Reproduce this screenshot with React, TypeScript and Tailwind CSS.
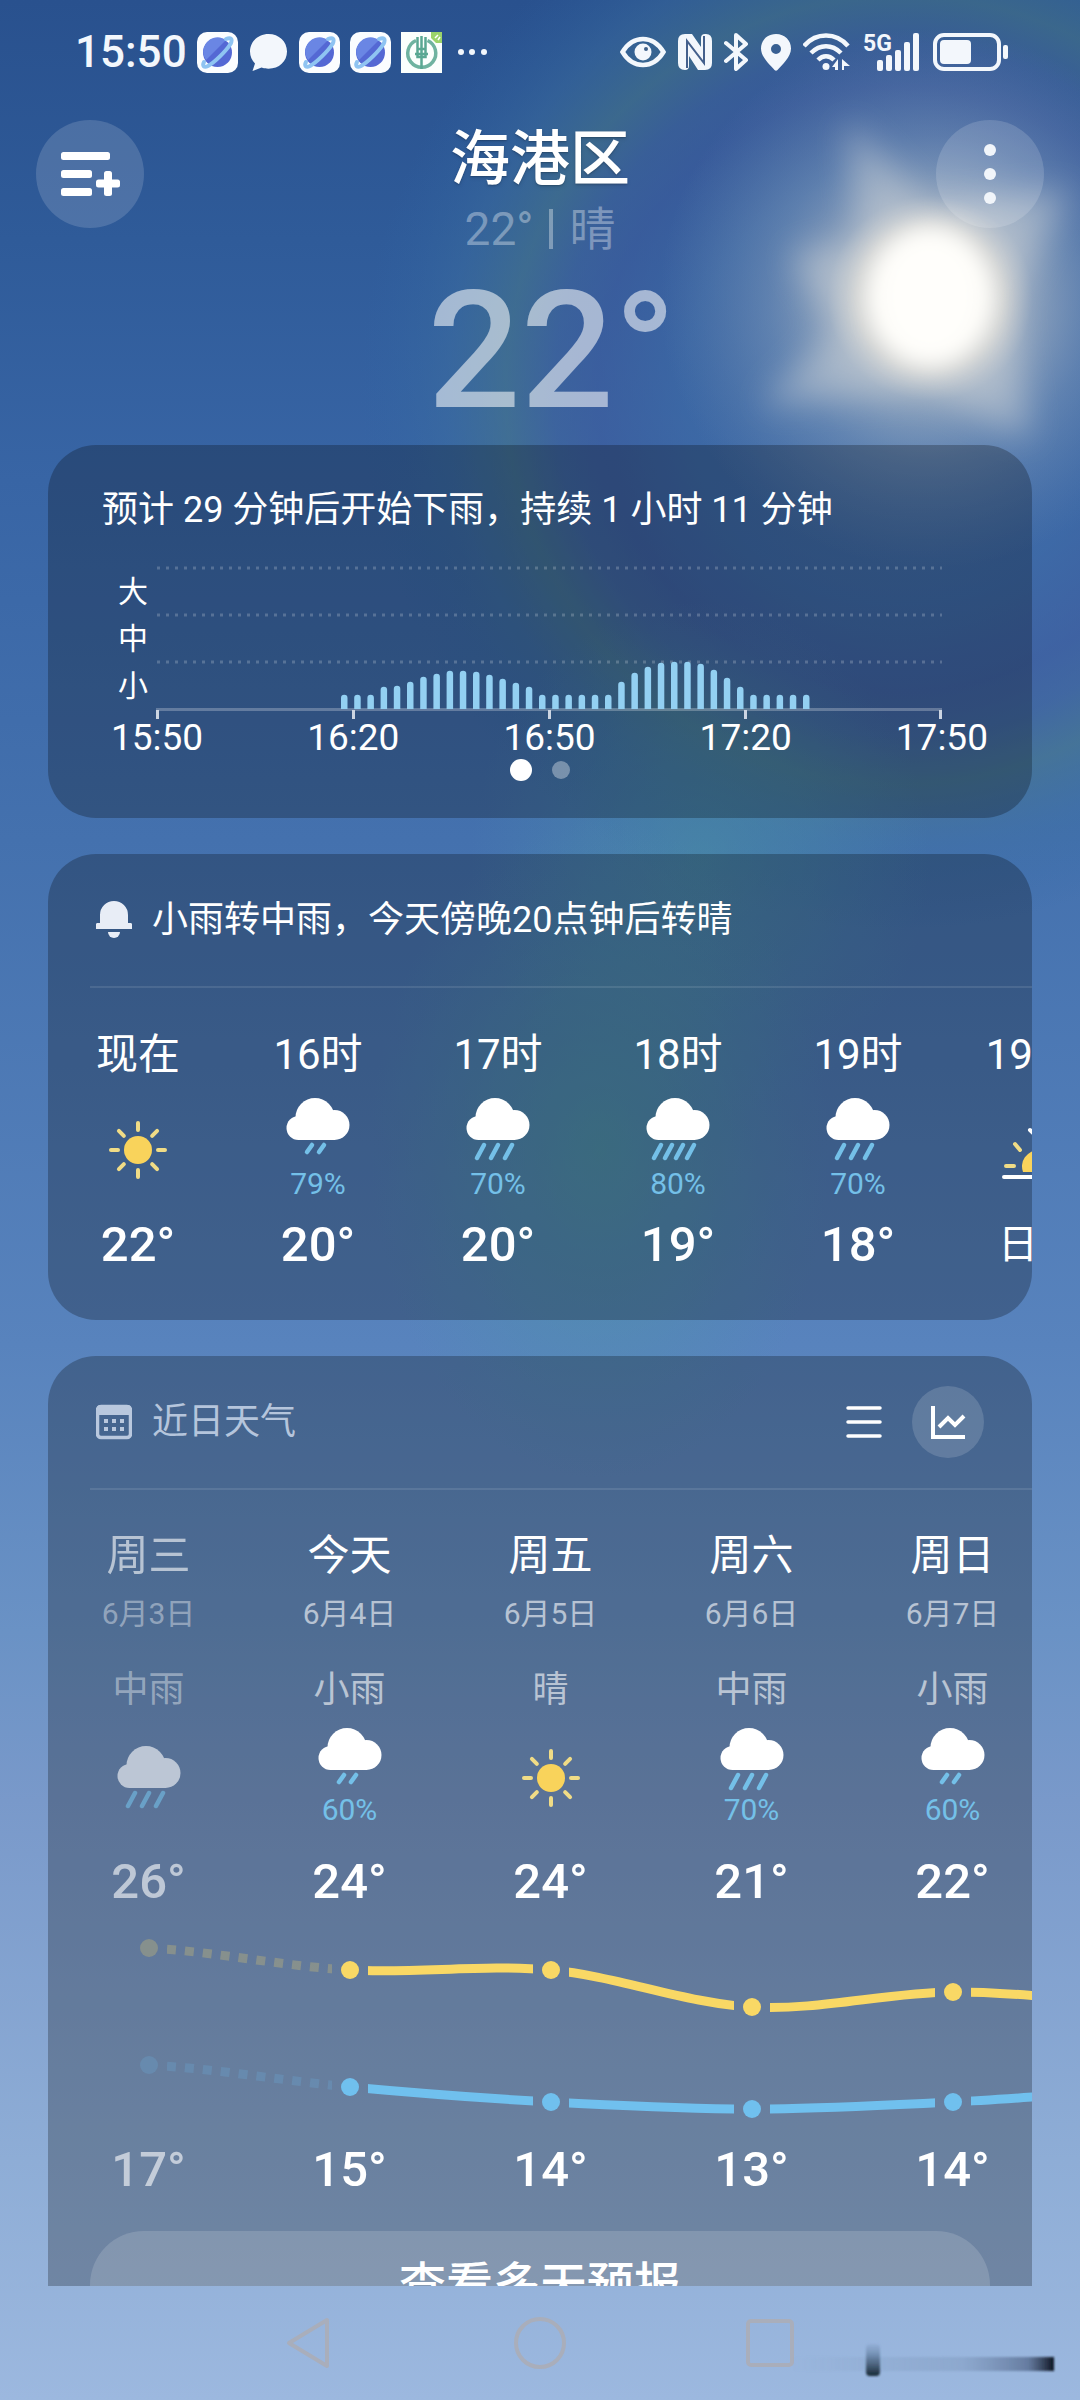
import type { ReactNode } from "react";

type Rain = "light" | "moderate" | "heavy";
type Sky = Rain | "sunny" | "sunset";

interface Hour {
  label: string;
  sky: Sky;
  chance?: string;
  value: string;
}

interface Day {
  name: string;
  date: string;
  text: string;
  sky: Sky;
  chance?: string;
  high: string;
  low: string;
  past?: boolean;
}

const HOURS: Hour[] = [
  { label: "现在", sky: "sunny", value: "22°" },
  { label: "16时", sky: "light", chance: "79%", value: "20°" },
  { label: "17时", sky: "moderate", chance: "70%", value: "20°" },
  { label: "18时", sky: "heavy", chance: "80%", value: "19°" },
  { label: "19时", sky: "moderate", chance: "70%", value: "18°" },
  { label: "19:28", sky: "sunset", value: "日落" },
];

const DAYS: Day[] = [
  { name: "周三", date: "6月3日", text: "中雨", sky: "moderate", high: "26°", low: "17°", past: true },
  { name: "今天", date: "6月4日", text: "小雨", sky: "light", chance: "60%", high: "24°", low: "15°" },
  { name: "周五", date: "6月5日", text: "晴", sky: "sunny", high: "24°", low: "14°" },
  { name: "周六", date: "6月6日", text: "中雨", sky: "moderate", chance: "70%", high: "21°", low: "13°" },
  { name: "周日", date: "6月7日", text: "小雨", sky: "light", chance: "60%", high: "22°", low: "14°" },
];

// One bar every two minutes, starting at 16:19
const RAIN_BARS = [
  14, 14, 14, 22, 23, 27, 32, 35, 38, 38, 37, 34, 30, 26, 22, 14, 14, 14, 14, 14,
  14, 27, 36, 42, 46, 47, 47, 45, 39, 31, 22, 14, 14, 14, 14, 14,
];
const RAIN_TIMES = ["15:50", "16:20", "16:50", "17:20", "17:50"];

const DROPS: Record<Rain, { x: number[]; dx: number; y2: number }> = {
  light: { x: [26, 38], dx: 5, y2: 54 },
  moderate: { x: [18, 32, 46], dx: 7, y2: 60 },
  heavy: { x: [15, 26, 37, 48], dx: 7, y2: 60 },
};

const RAYS = [0, 45, 90, 135, 180, 225, 270, 315];

function Backdrop() {
  return (
    <svg
      className="absolute inset-0 h-full w-full"
      viewBox="0 0 1080 2400"
      preserveAspectRatio="none"
      aria-hidden="true"
    >
      <defs>
        <linearGradient id="sky" x1="0" y1="0" x2="0" y2="1">
          <stop offset="0" stopColor="#29518e" />
          <stop offset="0.1" stopColor="#2f5b99" />
          <stop offset="0.2" stopColor="#3865a5" />
          <stop offset="0.35" stopColor="#4471ae" />
          <stop offset="0.56" stopColor="#5883bd" />
          <stop offset="0.68" stopColor="#6a92c5" />
          <stop offset="0.75" stopColor="#7999ca" />
          <stop offset="0.9" stopColor="#8eadd6" />
          <stop offset="1" stopColor="#9cb8df" />
        </linearGradient>
        <radialGradient id="halo" gradientUnits="userSpaceOnUse" cx="900" cy="390" r="540">
          <stop offset="0" stopColor="#4a76aa" stopOpacity="0.6" />
          <stop offset="0.4" stopColor="#3f6aa6" stopOpacity="0.65" />
          <stop offset="0.56" stopColor="#3f5d9e" stopOpacity="0.6" />
          <stop offset="0.64" stopColor="#42649b" stopOpacity="0.55" />
          <stop offset="0.73" stopColor="#487889" stopOpacity="0.55" />
          <stop offset="0.84" stopColor="#3d709f" stopOpacity="0.4" />
          <stop offset="1" stopColor="#2f66a6" stopOpacity="0" />
        </radialGradient>
        <radialGradient id="trail">
          <stop offset="0" stopColor="#4d9aa0" stopOpacity="0.75" />
          <stop offset="0.5" stopColor="#4d95a6" stopOpacity="0.45" />
          <stop offset="1" stopColor="#4d90b0" stopOpacity="0" />
        </radialGradient>
        <radialGradient id="glow" gradientUnits="userSpaceOnUse" cx="930" cy="298" r="270">
          <stop offset="0" stopColor="#ffffff" />
          <stop offset="0.18" stopColor="#fffdf8" />
          <stop offset="0.27" stopColor="#f0e8da" stopOpacity="0.8" />
          <stop offset="0.38" stopColor="#c9cdd0" stopOpacity="0.55" />
          <stop offset="0.6" stopColor="#9fb0c6" stopOpacity="0.35" />
          <stop offset="1" stopColor="#7892b6" stopOpacity="0" />
        </radialGradient>
        <filter id="soft" x="-50%" y="-50%" width="200%" height="200%">
          <feGaussianBlur stdDeviation="12" />
        </filter>
        <filter id="softer" x="-50%" y="-50%" width="200%" height="200%">
          <feGaussianBlur stdDeviation="16" />
        </filter>
      </defs>
      <rect width="1080" height="2400" fill="url(#sky)" />
      <circle cx="900" cy="390" r="540" fill="url(#halo)" />
      <ellipse cx="700" cy="860" rx="230" ry="260" fill="url(#trail)" opacity="0.6" />
      <ellipse cx="600" cy="1150" rx="230" ry="330" fill="url(#trail)" opacity="0.8" />
      <circle cx="930" cy="298" r="270" fill="url(#glow)" />
      <path
        d="M846 120 L930 205 L1070 190 L1012 300 L1030 440 L930 392 L760 405 L835 330 L790 255 L858 240Z"
        fill="#dfe0de"
        opacity="0.4"
        filter="url(#softer)"
      />
      <ellipse cx="930" cy="296" rx="58" ry="68" fill="#fffefb" filter="url(#soft)" />
    </svg>
  );
}

function PlanetIcon() {
  return (
    <svg width="41" height="41" viewBox="0 0 41 41" aria-hidden="true">
      <rect width="41" height="41" rx="10" fill="#fbfdff" />
      <circle cx="20.5" cy="20.5" r="14.5" fill="#5468d4" />
      <path d="M7 15a14.500 14.500 0 0 1 22-7L9 28a14.500 14.500 0 0 1-2-13Z" fill="#6a86e4" />
      <path
        d="M29 7c5-2 7 0 4.500 5C29 19 18 30 11 34c-4 2-6 0-4-4"
        fill="none"
        stroke="#8fc4f2"
        strokeWidth="4"
        strokeLinecap="round"
      />
    </svg>
  );
}

function StatusBar() {
  return (
    <div className="flex h-[104px] shrink-0 items-center justify-between pr-[71px] pl-[75px] text-[#f3f7fc]">
      <div className="flex items-center gap-2.5">
        <span className="text-[44px] leading-[44px] font-medium">15:50</span>
        <PlanetIcon />
        <svg width="41" height="41" viewBox="0 0 41 41" aria-hidden="true">
          <path
            d="M20.500 2C10.500 2 2 9.500 2 19.500c0 5 2 9 5 12L4.500 39l9-3.500c2 .8 4.500 1.200 7 1.200C31 36.700 39 29.500 39 19.500S31 2 20.500 2Z"
            fill="currentColor"
          />
        </svg>
        <PlanetIcon />
        <PlanetIcon />
        <svg width="41" height="41" viewBox="0 0 41 41" aria-hidden="true">
          <rect width="41" height="41" fill="#fbfffd" />
          <path d="M30 0h11v11h-6l-5-5Z" fill="#9bd36a" />
          <path d="M34 6l3-3M37 8l2-3" stroke="#fff" strokeWidth="1.500" />
          <path d="M15 8.500a14 14 0 1 0 11.500 0" fill="none" stroke="#6fb3a0" strokeWidth="3.500" />
          <path
            d="M16.500 5v12h8V5M20.500 4v33M14 22h13M16.500 17v8h8v-8"
            fill="none"
            stroke="#5aa893"
            strokeWidth="2.500"
          />
        </svg>
        <svg className="ml-1" width="32" height="8" viewBox="0 0 32 8" fill="currentColor" aria-hidden="true">
          <circle cx="5" cy="4" r="3" />
          <circle cx="16" cy="4" r="3" />
          <circle cx="28" cy="4" r="3" />
        </svg>
      </div>

      <div className="flex items-center gap-3">
        <svg width="46" height="32" viewBox="0 0 46 32" aria-hidden="true">
          <path
            d="M2.500 16C8 7 15 3 23 3s15 4 20.500 13C38 25 31 29 23 29S8 25 2.500 16Z"
            fill="none"
            stroke="currentColor"
            strokeWidth="4.500"
          />
          <circle cx="23" cy="16" r="8.500" fill="currentColor" />
          <circle cx="26" cy="13" r="2" fill="#3f6089" />
        </svg>
        <svg width="34" height="36" viewBox="0 0 34 36" aria-hidden="true">
          <path
            d="M7 0h7l9 13V4q0-4 4-4h1q6 0 6 7v22q0 7-7 7h-7L11 22v10q0 4-4 4Q0 36 0 29V7Q0 0 7 0Z"
            fill="currentColor"
          />
          <path d="M9 34V7l17 22V2" fill="none" stroke="#44608c" strokeWidth="2" />
        </svg>
        <svg width="25" height="38" viewBox="0 0 25 38" aria-hidden="true">
          <path
            d="M2 10l20 17-10 9V2l10 9L2 28"
            fill="none"
            stroke="currentColor"
            strokeWidth="4"
            strokeLinejoin="round"
            strokeLinecap="round"
          />
        </svg>
        <svg width="30" height="37" viewBox="0 0 30 37" aria-hidden="true">
          <path
            d="M15 0C6 0 0 6.500 0 14.500 0 23 9 31 13.500 36q1.500 1.500 3 0C21 31 30 23 30 14.500 30 6.500 24 0 15 0Zm0 10a5 5 0 1 1 0 10 5 5 0 0 1 0-10Z"
            fill="currentColor"
            fillRule="evenodd"
          />
        </svg>
        <svg width="48" height="38" viewBox="0 0 48 38" aria-hidden="true">
          <g fill="none" stroke="currentColor" strokeWidth="4.500">
            <path d="M1 13C13-1 33-1 45 13" />
            <path d="M8 20c9-9 21-9 30 0" />
            <path d="M15 27c5-5 11-5 16 0" />
          </g>
          <circle cx="23" cy="33.500" r="3.500" fill="currentColor" />
          <path d="M35 37V26l-6 8h3v3ZM39 26v11h2v-4h6Z" fill="currentColor" />
        </svg>
        <svg
          className="overflow-visible"
          width="58"
          height="38"
          viewBox="0 0 58 38"
          fill="currentColor"
          aria-hidden="true"
        >
          <text x="0" y="18" fontSize="23" fontWeight="700">
            5G
          </text>
          <rect x="14" y="27" width="6" height="11" rx="2" />
          <rect x="23" y="22" width="6" height="16" rx="2" />
          <rect x="32" y="17" width="6" height="21" rx="2" />
          <rect x="41" y="9" width="6" height="29" rx="2" />
          <rect x="50" y="0" width="6" height="38" rx="2" />
        </svg>
        <svg width="76" height="38" viewBox="0 0 76 38" aria-hidden="true">
          <rect x="2" y="2" width="64" height="34" rx="9" fill="none" stroke="currentColor" strokeWidth="4" />
          <rect x="7" y="7" width="31" height="24" rx="4" fill="currentColor" />
          <rect x="70" y="12" width="5" height="14" rx="2" fill="currentColor" />
        </svg>
      </div>
    </div>
  );
}

function RoundButton({ label, children }: { label: string; children: ReactNode }) {
  return (
    <button
      type="button"
      aria-label={label}
      className="flex size-[108px] items-center justify-center rounded-full bg-white/15"
    >
      {children}
    </button>
  );
}

function Header() {
  return (
    <header className="flex shrink-0 items-start justify-between px-9 pt-4">
      <RoundButton label="城市管理">
        <svg width="60" height="48" viewBox="0 0 60 48" fill="#fff" aria-hidden="true">
          <rect x="1" y="2" width="49" height="8" rx="2.500" />
          <rect x="1" y="20" width="31" height="8" rx="2.500" />
          <rect x="1" y="38" width="31" height="8" rx="2.500" />
          <rect x="36" y="29.500" width="24" height="8" rx="2.500" />
          <rect x="44" y="21" width="8" height="25" rx="2.500" />
        </svg>
      </RoundButton>
      <div className="flex flex-col items-center">
        <h1 className="text-[60px] leading-[80px] font-medium text-white text-shadow-md">海港区</h1>
        <p className="flex items-center gap-4 text-[46px] leading-[58px] text-white/35">
          <span>22°</span>
          <span className="h-10 w-1 bg-white/35" />
          <span>晴</span>
        </p>
        <p className="pl-6 text-[164px] leading-[187px] font-medium text-white/55">22°</p>
      </div>
      <RoundButton label="更多">
        <svg width="12" height="60" viewBox="0 0 12 60" fill="#f1f5fa" aria-hidden="true">
          <circle cx="6" cy="6" r="6" />
          <circle cx="6" cy="30" r="6" />
          <circle cx="6" cy="54" r="6" />
        </svg>
      </RoundButton>
    </header>
  );
}

function RainCard() {
  return (
    <section className="shrink-0 rounded-[48px] bg-black/25 pt-10 pb-9">
      <h2 className="pl-[54px] text-[36px] leading-[50px]">
        预计 29 分钟后开始下雨，持续 1 小时 11 分钟
      </h2>
      <div className="mt-[31px] flex pr-[90px] pl-[70px]">
        <div className="flex w-[38px] flex-col pt-0.5 text-[30px] leading-[47px]">
          <span>大</span>
          <span>中</span>
          <span>小</span>
        </div>
        <svg className="h-auto flex-1" viewBox="0 0 786 154" aria-hidden="true">
          {[2, 49, 96].map((y) => (
            <line
              key={y}
              x1="1"
              x2="786"
              y1={y}
              y2={y}
              stroke="#fff"
              strokeOpacity="0.2"
              strokeWidth="3"
              strokeDasharray="3 6"
            />
          ))}
          <rect x="0" y="142" width="786" height="3" fill="#fff" fillOpacity="0.25" />
          {RAIN_BARS.map((h, i) => (
            <path
              key={i}
              d={`M${185 + i * 13.2} 143v${3 - h}a3.250 3.250 0 0 1 6.500 0v${h - 3}Z`}
              fill="#93d0f2"
            />
          ))}
          {RAIN_TIMES.map((t, i) => (
            <rect key={t} x={Math.min(i * 196, 783)} y="144" width="3" height="9" fill="#ccd5e2" />
          ))}
        </svg>
      </div>
      <div className="flex justify-between pr-[44px] pl-[63px] text-[37px] leading-[36px]">
        {RAIN_TIMES.map((t) => (
          <span key={t}>{t}</span>
        ))}
      </div>
      <div className="mt-0.5 flex h-6 items-center justify-center gap-5">
        <span className="size-[22px] rounded-full bg-white" />
        <span className="size-[18px] rounded-full bg-white/35" />
      </div>
    </section>
  );
}

function SkyIcon({ sky }: { sky: Sky }) {
  if (sky === "sunny") {
    return (
      <svg width="60" height="60" viewBox="-30 -30 60 60" aria-hidden="true">
        <circle r="14" fill="#f9d35b" />
        {RAYS.map((a) => (
          <line
            key={a}
            x1="0"
            y1="-20"
            x2="0"
            y2="-27"
            transform={`rotate(${a})`}
            stroke="#f0dc86"
            strokeWidth="4"
            strokeLinecap="round"
          />
        ))}
      </svg>
    );
  }
  if (sky === "sunset") {
    return (
      <svg width="74" height="60" viewBox="-37 -44 74 60" strokeLinecap="round" aria-hidden="true">
        <path d="M-15 8a16 16 0 1 1 30 0Z" fill="#f9d35b" />
        <path d="M-32 2h8M-23-20l5 6M32 2h-8M23-20l-5 6" stroke="#f0dc86" strokeWidth="4" />
        <path d="M-34 13h68M-8-34L0-26 8-34M0-42v14" fill="none" stroke="#fff" strokeWidth="4" />
      </svg>
    );
  }
  const { x, dx, y2 } = DROPS[sky];
  return (
    <svg width="64" height="64" viewBox="0 0 64 64" aria-hidden="true">
      <g fill="#fff">
        <circle cx="29" cy="19.5" r="19.5" />
        <circle cx="12.5" cy="30" r="12" />
        <circle cx="48.5" cy="27" r="15" />
        <rect x="12" y="22" width="37" height="20" />
      </g>
      {x.map((v) => (
        <line
          key={v}
          x1={v}
          y1="47"
          x2={v - dx}
          y2={y2}
          stroke="#74c0e8"
          strokeWidth="4.500"
          strokeLinecap="round"
        />
      ))}
    </svg>
  );
}

function Conditions({ sky, chance }: { sky: Sky; chance?: string }) {
  return (
    <>
      <SkyIcon sky={sky} />
      {chance && <span className="text-[30px] leading-9 text-[#74c0e8]">{chance}</span>}
    </>
  );
}

function HourlyCard() {
  return (
    <section className="shrink-0 overflow-hidden rounded-[48px] bg-black/25 pb-[45px]">
      <div className="ml-[42px] flex h-[134px] items-center gap-5 border-b-2 border-white/10 pl-1.5">
        <svg width="36" height="38" viewBox="0 0 36 38" fill="#e8edf6" aria-hidden="true">
          <path d="M4 22V14a14 14 0 0 1 28 0v8h3q1 0 1 1.500V28H0v-4.500Q0 22 1 22Z" />
          <path d="M12 31h12a6 6 0 0 1-12 0Z" />
        </svg>
        <h2 className="text-[36px] leading-[50px]">小雨转中雨，今天傍晚20点钟后转晴</h2>
      </div>
      <ul className="flex pt-[43px]">
        {HOURS.map((h) => (
          <li key={h.label} className="flex w-[180px] shrink-0 flex-col items-center">
            <span className="text-[42px] leading-[48px]">{h.label}</span>
            <div className="mt-[18px] flex h-[106px] flex-col items-center justify-center gap-1">
              <Conditions sky={h.sky} chance={h.chance} />
            </div>
            {h.sky === "sunset" ? (
              <span className="mt-3 text-[40px] leading-[60px]">{h.value}</span>
            ) : (
              <span className="mt-3 text-[49px] leading-[60px] font-medium">{h.value}</span>
            )}
          </li>
        ))}
      </ul>
    </section>
  );
}

const STEP = 201;
const HIGH_Y = [36, 58, 58, 95, 80, 92];
const LOW_Y = [153, 175, 190, 197, 190, 178];

// Catmull-Rom segment between point i and i + 1
function segment(ys: number[], i: number) {
  const x = (n: number) => 101 + n * STEP;
  const y = (n: number) => ys[Math.max(0, Math.min(ys.length - 1, n))];
  const c1 = y(i) + (y(i + 1) - y(i - 1)) / 6;
  const c2 = y(i + 1) - (y(i + 2) - y(i)) / 6;
  return `M${x(i)} ${y(i)}C${x(i) + 67} ${c1} ${x(i + 1) - 67} ${c2} ${x(i + 1)} ${y(i + 1)}`;
}

function TrendLine({ ys, color, fade }: { ys: number[]; color: string; fade: string }) {
  return (
    <g stroke={color} fill="none">
      {ys.slice(1).map((_, i) => (
        <path
          key={i}
          d={segment(ys, i)}
          clipPath="url(#between)"
          strokeWidth="9"
          strokeDasharray={i === 0 ? "9 9" : undefined}
          opacity={i === 0 ? fade : "1"}
        />
      ))}
      {ys.map((y, i) => (
        <circle key={i} cx={101 + i * STEP} cy={y} r="9" fill={color} stroke="none" opacity={i === 0 ? fade : "1"} />
      ))}
    </g>
  );
}

function DailyCard() {
  return (
    <section className="shrink-0 overflow-hidden rounded-[48px] bg-black/25 pb-10">
      <div className="ml-[42px] flex h-[134px] items-center gap-5 border-b-2 border-white/10 pr-12 pl-1.5">
        <svg width="36" height="36" viewBox="0 0 36 36" aria-hidden="true">
          <rect x="1.500" y="2.500" width="33" height="31" rx="3.500" fill="none" stroke="#b9c8de" strokeWidth="3.500" />
          <path d="M1 4q0-3 3-3h28q3 0 3 3v7H1Z" fill="#b9c8de" />
          <path d="M8 15h4v4H8zM16 15h4v4h-4zM24 15h4v4h-4zM8 23h4v4H8zM16 23h4v4h-4zM24 23h4v4h-4z" fill="#b9c8de" />
        </svg>
        <h2 className="flex-1 text-[36px] leading-[50px] text-[#b5c5dc]">近日天气</h2>
        <button type="button" aria-label="列表" className="flex size-[56px] items-center justify-center">
          <svg width="36" height="34" viewBox="0 0 36 34" aria-hidden="true">
            <path d="M2 3h32M2 17h32M2 31h32" stroke="#fff" strokeWidth="3.500" strokeLinecap="round" />
          </svg>
        </button>
        <button
          type="button"
          aria-label="曲线图"
          className="flex size-[72px] items-center justify-center rounded-full bg-white/15"
        >
          <svg width="36" height="36" viewBox="0 0 36 36" fill="none" stroke="#fff" strokeWidth="4" aria-hidden="true">
            <path d="M3 2v31h32" />
            <path d="M9 23l9-9 7 7 9-9" />
          </svg>
        </button>
      </div>
      <ul className="flex pt-[42px]">
        {DAYS.map((d) => (
          <li key={d.date} className="flex w-[201px] shrink-0 flex-col items-center">
            <span className={d.past ? "text-[42px] leading-[48px] opacity-60" : "text-[42px] leading-[48px]"}>
              {d.name}
            </span>
            <span className={d.past ? "mt-4 text-[30px] leading-9 text-white/40" : "mt-4 text-[30px] leading-9 text-white/60"}>
              {d.date}
            </span>
            <span className={d.past ? "mt-9 text-[36px] leading-[44px] text-white/40" : "mt-9 text-[36px] leading-[44px] text-white/60"}>
              {d.text}
            </span>
            <div
              className={
                d.past
                  ? "mt-4 flex h-[100px] flex-col items-center justify-center opacity-60"
                  : "mt-4 flex h-[100px] flex-col items-center justify-center"
              }
            >
              <Conditions sky={d.sky} chance={d.chance} />
            </div>
            <span
              className={
                d.past
                  ? "mt-6 text-[49px] leading-[60px] font-medium text-white/60"
                  : "mt-6 text-[49px] leading-[60px] font-medium"
              }
            >
              {d.high}
            </span>
          </li>
        ))}
      </ul>
      <svg className="block max-w-none" width="1206" height="228" viewBox="0 0 1206 228" aria-hidden="true">
        <clipPath id="between">
          {HIGH_Y.map((_, i) => (
            <rect key={i} x={119 + i * STEP} y="0" width="165" height="228" />
          ))}
        </clipPath>
        <TrendLine ys={HIGH_Y} color="#f9d865" fade="0.25" />
        <TrendLine ys={LOW_Y} color="#70c0ee" fade="0.2" />
      </svg>
      <ul className="flex">
        {DAYS.map((d) => (
          <li
            key={d.date}
            className={
              d.past
                ? "w-[201px] shrink-0 text-center text-[49px] leading-[60px] font-medium text-white/60"
                : "w-[201px] shrink-0 text-center text-[49px] leading-[60px] font-medium"
            }
          >
            {d.low}
          </li>
        ))}
      </ul>
      <div className="px-[42px] pt-[31px]">
        <button
          type="button"
          className="h-[108px] w-full rounded-[54px] bg-white/15 text-[47px] leading-[60px] font-medium"
        >
          查看多天预报
        </button>
      </div>
    </section>
  );
}

function NavBar() {
  return (
    <nav className="relative flex h-[114px] shrink-0 items-center justify-center gap-[176px]">
      <button type="button" aria-label="返回">
        <svg width="54" height="54" viewBox="0 0 54 54" fill="none" stroke="#a9aebb" strokeWidth="4" aria-hidden="true">
          <path d="M44 4v46L6 27Z" strokeLinejoin="round" />
        </svg>
      </button>
      <button type="button" aria-label="主页">
        <svg width="54" height="54" viewBox="0 0 54 54" fill="none" stroke="#a9aebb" strokeWidth="4" aria-hidden="true">
          <circle cx="27" cy="27" r="24" />
        </svg>
      </button>
      <button type="button" aria-label="最近任务">
        <svg width="54" height="54" viewBox="0 0 54 54" fill="none" stroke="#a9aebb" strokeWidth="4" aria-hidden="true">
          <rect x="5" y="5" width="44" height="44" rx="3" />
        </svg>
      </button>
      <svg className="absolute right-6 bottom-5" width="264" height="40" viewBox="0 0 264 40" aria-hidden="true">
        <defs>
          <linearGradient id="smearX" x1="0" x2="1" y1="0" y2="0">
            <stop offset="0" stopColor="#6f88aa" stopOpacity="0" />
            <stop offset="0.65" stopColor="#6f88aa" stopOpacity="0.3" />
            <stop offset="0.9" stopColor="#4a5d80" stopOpacity="0.65" />
            <stop offset="1" stopColor="#0c131f" />
          </linearGradient>
          <linearGradient id="smearY" x1="0" x2="0" y1="0" y2="1">
            <stop offset="0" stopColor="#4f6d92" stopOpacity="0.1" />
            <stop offset="1" stopColor="#14252f" />
          </linearGradient>
          <filter id="smearBlur">
            <feGaussianBlur stdDeviation="1" />
          </filter>
        </defs>
        <rect x="0" y="17" width="262" height="14" fill="url(#smearX)" filter="url(#smearBlur)" />
        <rect x="74" y="4" width="14" height="32" rx="4" fill="url(#smearY)" filter="url(#smearBlur)" />
      </svg>
    </nav>
  );
}

export default function App() {
  return (
    <div className="relative h-screen overflow-hidden bg-[#3865a5] [font-family:Roboto,'Noto_Sans_CJK_SC',sans-serif] text-white">
      <Backdrop />
      <div className="relative flex h-full flex-col">
        <StatusBar />
        <Header />
        <main className="flex min-h-0 flex-1 flex-col gap-9 overflow-hidden px-12">
          <RainCard />
          <HourlyCard />
          <DailyCard />
        </main>
        <NavBar />
      </div>
    </div>
  );
}
